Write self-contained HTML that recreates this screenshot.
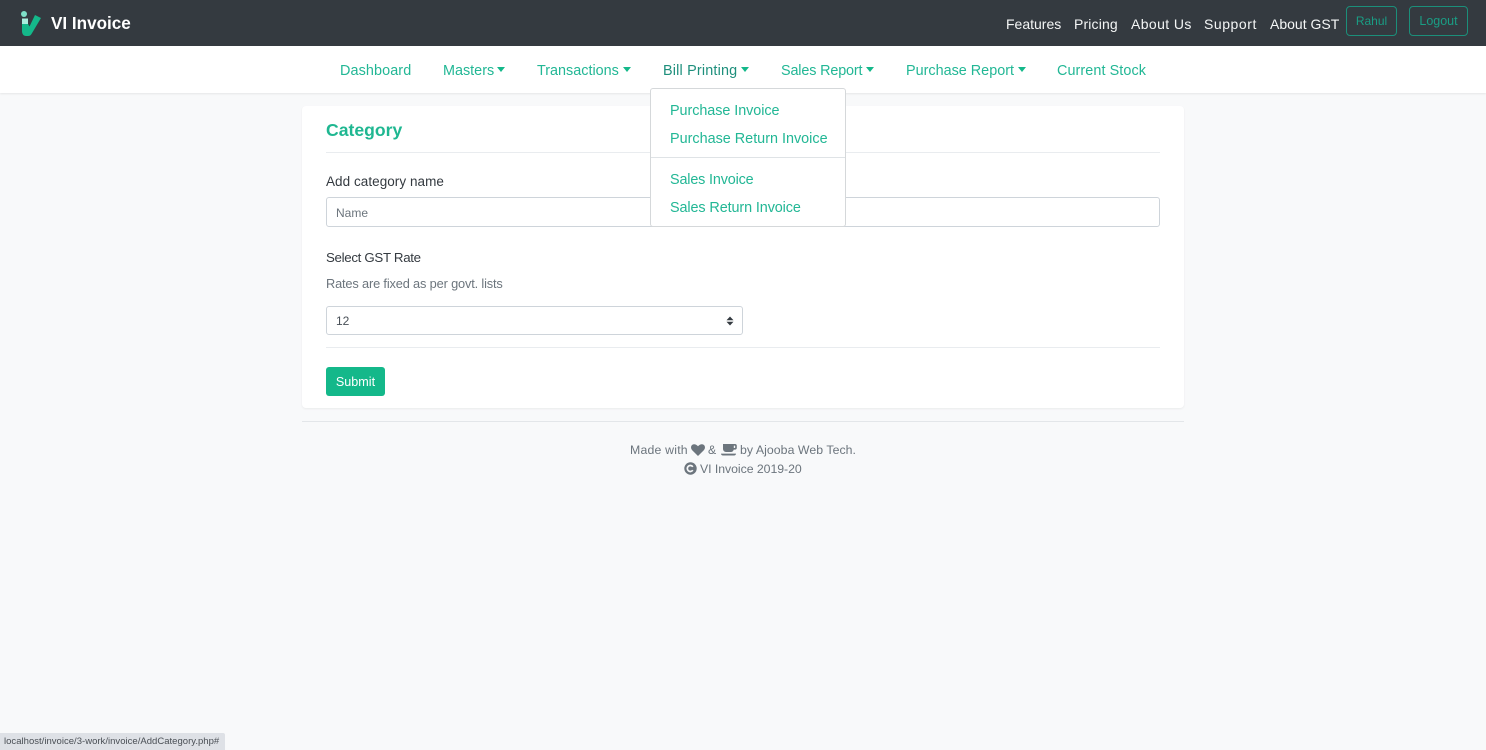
<!DOCTYPE html>
<html lang="en">
<head>
<meta charset="utf-8">
<title>Category - VI Invoice</title>
<style>
html,body{margin:0;padding:0;width:1486px;height:750px;overflow:hidden;background:#f8f9fa;font-family:"Liberation Sans",sans-serif;color:#343a40}
*{box-sizing:border-box}
.t{position:absolute;white-space:nowrap;line-height:20px;height:20px}
.box{position:absolute}
.top{color:#f4f6f6;font-size:14px}
.nav{color:#22b795;font-size:14.4px}
.dd{color:#22b795;font-size:14.4px}
.caret{position:absolute;width:0;height:0;border-left:4.5px solid transparent;border-right:4.5px solid transparent;border-top:5px solid #14b88a}
.foot{color:#6c757d;font-size:12.3px}
.btn{position:absolute;top:6px;height:30px;border:1px solid #1b8f7a;border-radius:4px;color:#1a9d84;line-height:29px;text-align:center}
</style>
</head>
<body>
<header class="box" style="left:0;top:0;width:1486px;height:46px;background:#343a40"></header>
<svg class="box" style="left:18px;top:9px" width="26" height="30" viewBox="0 0 26 30">
  <circle cx="6" cy="5" r="3" fill="#7fe0c8"/>
  <path d="M4 9.500h6V15H4z" fill="#a8eedd"/>
  <path d="M4 15h6l1.500 2.500L17 6l6 3-9.500 16c-1 1.500-2 2-3.500 2H8c-2.500 0-4-2-4-5z" fill="#14b88a"/>
</svg>
<span class="t" style="left:51px;top:14px;font-size:17.1px;font-weight:bold;color:#fff">VI Invoice</span>
<a class="t top" style="left:1006px;top:14px">Features</a>
<a class="t top" style="left:1074px;top:14px;letter-spacing:.15px">Pricing</a>
<a class="t top" style="left:1131px;top:14px;letter-spacing:.4px">About Us</a>
<a class="t top" style="left:1204px;top:14px;letter-spacing:.55px">Support</a>
<a class="t top" style="left:1270px;top:14px">About GST</a>
<div class="btn" style="left:1346px;width:51px;font-size:12px">Rahul</div>
<div class="btn" style="left:1409px;width:59px;font-size:12.5px">Logout</div>

<nav class="box" style="left:0;top:46px;width:1486px;height:47px;background:#fff;box-shadow:0 1px 2px rgba(0,0,0,.08)"></nav>
<a class="t nav" style="left:340px;top:61px;letter-spacing:.1px">Dashboard</a>
<a class="t nav" style="left:443px;top:61px">Masters</a><i class="caret" style="left:497px;top:67px"></i>
<a class="t nav" style="left:537px;top:61px">Transactions</a><i class="caret" style="left:623px;top:67px"></i>
<a class="t nav" style="left:663px;top:61px;color:#1e8f7c;letter-spacing:.18px">Bill Printing</a><i class="caret" style="left:741px;top:67px"></i>
<a class="t nav" style="left:781px;top:61px;letter-spacing:-.15px">Sales Report</a><i class="caret" style="left:866px;top:67px"></i>
<a class="t nav" style="left:906px;top:61px">Purchase Report</a><i class="caret" style="left:1018px;top:67px"></i>
<a class="t nav" style="left:1057px;top:61px;letter-spacing:.08px">Current Stock</a>

<main class="box" style="left:302px;top:106px;width:882px;height:302px;background:#fff;border-radius:4px;box-shadow:0 1px 2px rgba(0,0,0,.06)"></main>
<span class="t" style="left:326px;top:120px;font-size:17.6px;font-weight:bold;color:#1fb791">Category</span>
<div class="box" style="left:326px;top:152px;width:834px;height:1px;background:#e9ecef"></div>
<span class="t" style="left:326px;top:172px;font-size:13.5px;color:#343a40;letter-spacing:.05px">Add category name</span>
<div class="box" style="left:326px;top:197px;width:834px;height:30px;background:#fff;border:1px solid #ced4da;border-radius:3px"></div>
<span class="t" style="left:336px;top:203px;font-size:12px;color:#6c757d">Name</span>
<span class="t" style="left:326px;top:248px;font-size:13.3px;color:#343a40;letter-spacing:-.32px">Select GST Rate</span>
<span class="t" style="left:326px;top:274px;font-size:12.8px;color:#6c757d;letter-spacing:-.16px">Rates are fixed as per govt. lists</span>
<div class="box" style="left:326px;top:306px;width:417px;height:29px;background:#fff;border:1px solid #ced4da;border-radius:3px"></div>
<span class="t" style="left:336px;top:311px;font-size:12px;color:#495057">12</span>
<svg class="box" style="left:726px;top:316px" width="8" height="10" viewBox="0 0 8 10"><path d="M4 0.500L7.500 4.200H.5zM4 9.500L.5 5.800h7z" fill="#343a40"/></svg>
<div class="box" style="left:326px;top:347px;width:834px;height:1px;background:#e9ecef"></div>
<div class="box" style="left:326px;top:367px;width:59px;height:29px;background:#14b88a;border-radius:3px;color:#fff;font-size:12.6px;line-height:30px;text-align:center">Submit</div>

<div class="box" style="left:302px;top:421px;width:882px;height:1px;background:#e3e6e9"></div>
<span class="t foot" style="left:630px;top:440px;letter-spacing:.2px">Made with</span>
<svg class="box" style="left:691px;top:444px" width="14" height="12" viewBox="0 0 14 12"><path d="M7 12L1.200 6.200C-.4 4.500-.3 2 1.200.900 2.800-.3 5 0 7 2.200 9 0 11.200-.3 12.800.900 14.300 2 14.400 4.500 12.800 6.200z" fill="#6c757d"/></svg>
<span class="t foot" style="left:708px;top:440px">&amp;</span>
<svg class="box" style="left:721px;top:443px" width="16" height="13" viewBox="0 0 16 13"><path d="M2 1H14a1.800 1.800 0 0 1 1.800 1.800v2a1.800 1.800 0 0 1-1.800 1.800h-1.300a3 3 0 0 1-3 2.400H5a3 3 0 0 1-3-3zM12.800 2.600v2.400h.9a.5.5 0 0 0 .5-.5V3.100a.5.5 0 0 0-.5-.5zM0 10.600h15c0 1.200-.8 1.900-2 1.900H2c-1.200 0-2-.7-2-1.900z" fill="#6c757d" fill-rule="evenodd"/></svg>
<span class="t foot" style="left:740px;top:440px;letter-spacing:.05px">by Ajooba Web Tech.</span>
<svg class="box" style="left:684px;top:462px" width="13" height="13" viewBox="0 0 13 13"><circle cx="6.500" cy="6.500" r="6.200" fill="#6c757d"/><path d="M8.800 8.200A3 3 0 1 1 8.800 4.800" fill="none" stroke="#f8f9fa" stroke-width="1.700"/></svg>
<span class="t foot" style="left:700px;top:459px;letter-spacing:-.05px">VI Invoice 2019-20</span>

<div class="box" style="left:650px;top:88px;width:196px;height:139px;background:#fff;border:1px solid #d5d8da;border-radius:3px"></div>
<a class="t dd" style="left:670px;top:101px;letter-spacing:-.06px">Purchase Invoice</a>
<a class="t dd" style="left:670px;top:129px">Purchase Return Invoice</a>
<div class="box" style="left:651px;top:157px;width:194px;height:1px;background:#dfe3e6"></div>
<a class="t dd" style="left:670px;top:170px;letter-spacing:-.16px">Sales Invoice</a>
<a class="t dd" style="left:670px;top:198px;letter-spacing:-.1px">Sales Return Invoice</a>

<div class="box" style="left:0;top:733px;width:225px;height:17px;background:#dee1e6;border-top-right-radius:2px;color:#4a4f55;font-size:9.500px;line-height:18px;padding-left:4px;white-space:nowrap;overflow:hidden;letter-spacing:.02px">localhost/invoice/3-work/invoice/AddCategory.php#</div>
</body>
</html>
